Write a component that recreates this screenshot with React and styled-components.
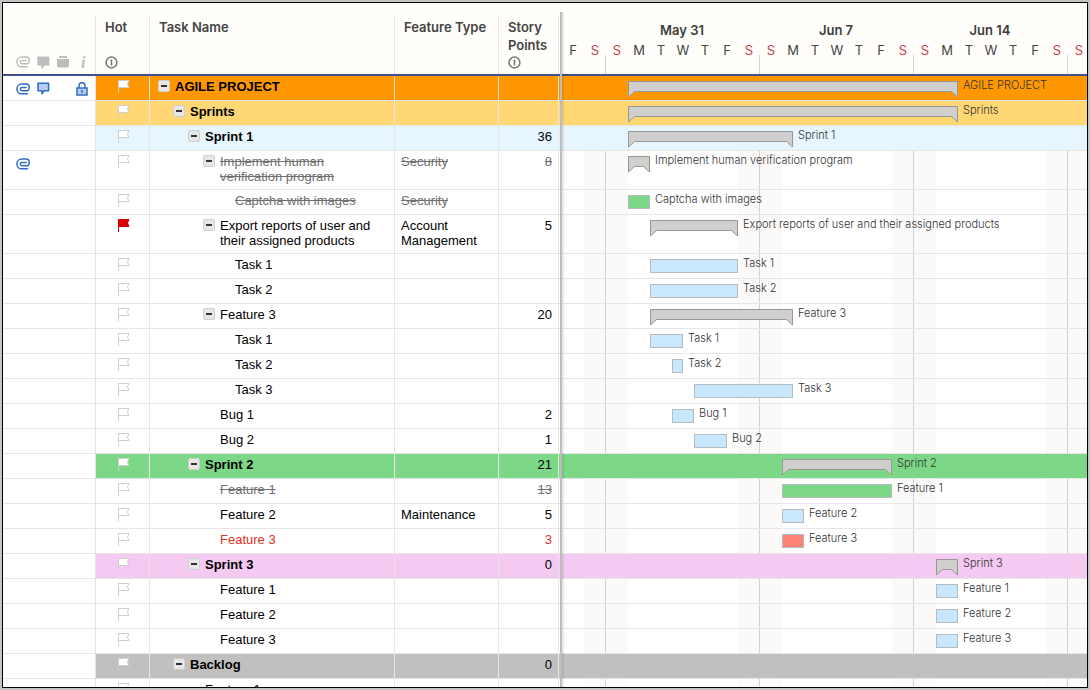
import styled, { createGlobalStyle } from "styled-components";

const DAY = 22;

const weeks = ["May 31", "Jun 7", "Jun 14"];
const days = "FSSMTWTFSSMTWTFSSMTWTFSS".split("");

// start and span are counted in days from the left edge of the timeline
const rows = [
  { name: "AGILE PROJECT", level: 0, parent: true, bold: true, color: "#ff9800", bar: "summary", start: 3, span: 15, icons: true },
  { name: "Sprints", level: 1, parent: true, bold: true, color: "#ffd774", bar: "summary", start: 3, span: 15 },
  { name: "Sprint 1", level: 2, parent: true, bold: true, color: "#e6f5fe", points: 36, bar: "summary", start: 3, span: 7.5 },
  { name: "Implement human verification program", level: 3, parent: true, done: true, type: "Security", points: 8, bar: "summary", start: 3, span: 1, clip: true },
  { name: "Captcha with images", level: 4, done: true, type: "Security", bar: "#7cd787", start: 3, span: 1 },
  { name: "Export reports of user and their assigned products", level: 3, parent: true, hot: true, type: "Account Management", points: 5, bar: "summary", start: 4, span: 4 },
  { name: "Task 1", level: 4, bar: "#c9e8fd", start: 4, span: 4 },
  { name: "Task 2", level: 4, bar: "#c9e8fd", start: 4, span: 4 },
  { name: "Feature 3", level: 3, parent: true, points: 20, bar: "summary", start: 4, span: 6.5 },
  { name: "Task 1", level: 4, bar: "#c9e8fd", start: 4, span: 1.5 },
  { name: "Task 2", level: 4, bar: "#c9e8fd", start: 5, span: 0.5 },
  { name: "Task 3", level: 4, bar: "#c9e8fd", start: 6, span: 4.5 },
  { name: "Bug 1", level: 3, points: 2, bar: "#c9e8fd", start: 5, span: 1 },
  { name: "Bug 2", level: 3, points: 1, bar: "#c9e8fd", start: 6, span: 1.5 },
  { name: "Sprint 2", level: 2, parent: true, bold: true, color: "#7cd787", points: 21, bar: "summary", start: 10, span: 5 },
  { name: "Feature 1", level: 3, done: true, points: 13, bar: "#7cd787", start: 10, span: 5 },
  { name: "Feature 2", level: 3, type: "Maintenance", points: 5, bar: "#c9e8fd", start: 10, span: 1 },
  { name: "Feature 3", level: 3, late: true, points: 3, bar: "#ff8278", start: 10, span: 1 },
  { name: "Sprint 3", level: 2, parent: true, bold: true, color: "#f4c9f2", points: 0, bar: "summary", start: 17, span: 1 },
  { name: "Feature 1", level: 3, bar: "#c9e8fd", start: 17, span: 1 },
  { name: "Feature 2", level: 3, bar: "#c9e8fd", start: 17, span: 1 },
  { name: "Feature 3", level: 3, bar: "#c9e8fd", start: 17, span: 1 },
  { name: "Backlog", level: 1, parent: true, bold: true, color: "#c1c0be", points: 0 },
  { name: "Feature 1", level: 2 },
];

const ClipIcon = () => (
  <svg width="14" height="12" viewBox="0 0 14 12" fill="none" stroke="currentColor" strokeWidth="1.5" strokeLinecap="round">
    <path d="M11.4 10.8H5.6A4.7 4.9 0 0 1 5.6 1H10.2a3 3.4 0 0 1 0 6.8H6a1.7 1.7 0 0 1 0-3.4h4.2" />
  </svg>
);

const CommentIcon = ({ fill }) => (
  <svg width="13" height="13" viewBox="0 0 13 13" fill={fill} stroke="currentColor" strokeWidth="1.5" strokeLinejoin="round">
    <path d="M1 1.2h10.6v7.6H7L5 11.8V8.8H1z" />
  </svg>
);

const ProofIcon = () => (
  <svg width="12" height="12" viewBox="0 0 12 12" fill="currentColor">
    <rect x="2" y="0" width="8" height="2" />
    <path d="M0 3h12v6.5a2 2 0 0 1-2 2H2a2 2 0 0 1-2-2z" />
  </svg>
);

const LockIcon = () => (
  <svg width="12" height="14" viewBox="0 0 12 14" fill="none" stroke="currentColor" strokeWidth="1.5">
    <path d="M3 6V3.8a3 3 0 0 1 6 0V6" />
    <rect x="1" y="6" width="10" height="7" fill="#b9cdf0" />
    <path d="M6 8v3" />
  </svg>
);

const HintIcon = () => (
  <svg width="13" height="13" viewBox="0 0 13 13" fill="none" stroke="#757575" strokeWidth="1.5">
    <circle cx="6.5" cy="6.5" r="5.4" />
    <path d="M6.5 3.5v6M5.5 4.2h1" />
  </svg>
);

const FlagIcon = ({ hot }) => (
  <svg width="12" height="15" viewBox="0 0 12 15" fill={hot ? "#d60000" : "#fff"} stroke={hot ? "#d60000" : "#cfcfcf"}>
    <path d="M.5 1.5h10.5l-1.5 3.5 1.5 3.5H.5" />
    <path d="M.5 1v13" fill="none" />
  </svg>
);

const SummaryBar = ({ width }) => (
  <svg width={width} height="17" fill="#d0cfce" stroke="#979797">
    <path d={`M.5 .5H${width - 0.5}V16L${width - 6.5} 10.5H6.5L.5 16Z`} />
  </svg>
);

const App = () => {
  return (
    <>
      <GlobalStyle />
      <Frame>
        <Sheet>
          <colgroup>
            <Col $width={93} />
            <Col $width={54} />
            <Col $width={245} />
            <Col $width={104} />
            <Col $width={60} />
            <Col $width={3} />
            <col />
          </colgroup>
          <thead>
            <tr>
              <Th>
                <HeadIcons>
                  <IconSlot $width={21}>
                    <ClipIcon />
                  </IconSlot>
                  <IconSlot $width={20}>
                    <CommentIcon fill="currentColor" />
                  </IconSlot>
                  <IconSlot $width={24}>
                    <ProofIcon />
                  </IconSlot>
                  <Info>i</Info>
                </HeadIcons>
              </Th>
              <Th>
                <Title>
                  Hot
                  <HintIcon />
                </Title>
              </Th>
              <Th>
                <Title>Task Name</Title>
              </Th>
              <Th>
                <Title>Feature Type</Title>
              </Th>
              <Th>
                <Title>
                  Story Points
                  <HintIcon />
                </Title>
              </Th>
              <Th />
              <Th>
                <Calendar>
                  <Weeks>
                    {weeks.map((week) => (
                      <Week key={week}>{week}</Week>
                    ))}
                  </Weeks>
                  <Days>
                    {days.map((day, i) => (
                      <Day key={i} $weekend={day === "S"}>
                        {day}
                      </Day>
                    ))}
                  </Days>
                </Calendar>
              </Th>
            </tr>
          </thead>
          <tbody>
            {rows.map((row, i) => (
              <Row key={i} $color={row.color} $done={row.done} $late={row.late}>
                <IconCell>
                  <RowIcons>
                    <IconSlot $width={21}>
                      {(row.icons || row.clip) && <ClipIcon />}
                    </IconSlot>
                    <IconSlot $width={39}>
                      {row.icons && <CommentIcon fill="#b9cdf0" />}
                    </IconSlot>
                    {row.icons && <LockIcon />}
                  </RowIcons>
                </IconCell>
                <FlagCell>
                  <FlagIcon hot={row.hot} />
                </FlagCell>
                <TextCell $done={row.done}>
                  <Task $level={row.level} $bold={row.bold}>
                    {row.parent ? (
                      <Toggle type="button" aria-label="Collapse" />
                    ) : (
                      <Spacer />
                    )}
                    <Name>{row.name}</Name>
                  </Task>
                </TextCell>
                <TypeCell $done={row.done}>{row.type}</TypeCell>
                <PointsCell $done={row.done}>{row.points}</PointsCell>
                <Td $plain />
                <ChartCell $color={row.color}>
                  {row.bar && (
                    <Track style={{ paddingLeft: row.start * DAY }}>
                      {row.bar === "summary" ? (
                        <SummaryBar width={row.span * DAY} />
                      ) : (
                        <Bar $fill={row.bar} style={{ width: row.span * DAY }} />
                      )}
                      <Label>{row.name}</Label>
                    </Track>
                  )}
                </ChartCell>
              </Row>
            ))}
          </tbody>
        </Sheet>
        <Splitter />
      </Frame>
    </>
  );
};

export default App;

const GlobalStyle = createGlobalStyle`
  * {
    box-sizing: border-box;
  }

  body {
    margin: 0;
    background-color: #c4c4c4;
    font-family: "Liberation Sans", Arial, sans-serif;
    font-size: 13px;
    line-height: 15px;
    color: #000;
  }

  svg {
    display: block;
    flex-shrink: 0;
  }
`;

const Frame = styled.main`
  position: relative;
  height: calc(100vh - 4px);
  margin: 2px;
  border: 1px solid #000;
  background-color: #fff;
  overflow: hidden;
`;

const Sheet = styled.table`
  width: 100%;
  table-layout: fixed;
  border-collapse: separate;
  border-spacing: 0;
`;

const Col = styled.col`
  width: ${({ $width }) => $width}px;
`;

const Th = styled.th`
  height: 73px;
  padding: 13px 0 0;
  background-color: #fffefa;
  border-bottom: 2px solid #43508f;
  vertical-align: top;
  text-align: left;
  font-weight: 600;
  overflow: hidden;
`;

const Title = styled.div`
  display: flex;
  flex-direction: column;
  justify-content: space-between;
  height: 58px;
  padding: 2px 9px 5px;
  border-right: 1px solid #e6e6e6;
  font-family: Inter, sans-serif;
  font-size: 13px;
  line-height: 18px;
  color: #444;
`;

const HeadIcons = styled.div`
  display: flex;
  align-items: center;
  height: 58px;
  padding: 34px 0 0 13px;
  border-right: 1px solid #e6e6e6;
  color: #bdbdbd;
`;

const Info = styled.span`
  font-family: "Liberation Serif", serif;
  font-size: 16px;
  font-style: italic;
  font-weight: 700;
`;

const IconSlot = styled.span`
  width: ${({ $width }) => $width}px;
`;

// the week ticks run along the bottom 19px only
const Calendar = styled.div`
  height: 58px;
  font-family: Inter, sans-serif;
  font-size: 13px;
  line-height: 20px;
  color: #3c3c3c;
  background: repeating-linear-gradient(
      to right,
      transparent 0 43px,
      #d2d2d2 43px 44px,
      transparent 44px 154px
    )
    bottom / 100% 19px no-repeat;
`;

const Weeks = styled.div`
  display: flex;
  padding: 4px 0 0 43px;
`;

const Week = styled.span`
  flex: none;
  width: 154px;
  text-align: center;
`;

const Days = styled.div`
  display: flex;
  font-weight: 400;
`;

const Day = styled.span`
  flex: none;
  width: 22px;
  text-align: center;
  color: ${({ $weekend }) => ($weekend ? "#c8414b" : "#444")};
`;

const Row = styled.tr`
  background-color: ${({ $color }) => $color || "#fff"};
  color: ${({ $done, $late }) => ($done ? "#707070" : $late ? "#dd3224" : "#000")};
`;

const Td = styled.td`
  height: 25px;
  padding: 3px 0 5px;
  border-bottom: 1px solid #e6e6e6;
  border-right: ${({ $plain }) => ($plain ? "none" : "1px solid #e6e6e6")};
  vertical-align: top;
`;

const IconCell = styled(Td)`
  padding-bottom: 0;
  background-color: #fff;
  color: #2f6ec4;
`;

const RowIcons = styled.div`
  display: flex;
  align-items: center;
  height: 19px;
  padding-left: 13px;
`;

const FlagCell = styled(Td)`
  padding-left: 22px;
`;

const TextCell = styled(Td)`
  text-decoration: ${({ $done }) => ($done ? "line-through" : "none")};
`;

const TypeCell = styled(TextCell)`
  padding-left: 6px;
`;

const PointsCell = styled(TextCell)`
  padding-right: 6px;
  text-align: right;
`;

const Task = styled.div`
  display: flex;
  gap: 5px;
  padding-left: ${({ $level }) => 8 + $level * 15}px;
  padding-right: 12px;
  font-weight: ${({ $bold }) => ($bold ? 700 : 400)};
`;

const Name = styled.span`
  flex: 1;
`;

const Spacer = styled.span`
  width: 12px;
`;

const Toggle = styled.button`
  display: flex;
  align-items: center;
  justify-content: center;
  flex: none;
  width: 12px;
  height: 12px;
  margin-top: 1px;
  padding: 0;
  background-color: #e9e7e5;
  border: 1px solid #cfcfcf;
  border-radius: 2px;
  cursor: pointer;

  &::before {
    content: "";
    width: 6px;
    height: 2px;
    background-color: #333;
  }
`;

const ChartCell = styled(Td)`
  padding: 0;
  border-right: none;
  overflow: hidden;
  background: ${({ $color }) =>
    $color ||
    `repeating-linear-gradient(
      to right,
      #fff 0 22px,
      #fbfaf9 22px 43px,
      #d2d2d2 43px 44px,
      #fbfaf9 44px 66px,
      #fff 66px 154px
    )`};
`;

const Track = styled.div`
  display: flex;
  gap: 5px;
  padding-top: 5px;
`;

const Bar = styled.div`
  flex: none;
  height: 14px;
  background-color: ${({ $fill }) => $fill};
  border: 1px solid #b4bcc2;
`;

const Label = styled.span`
  font-family: Inter, sans-serif;
  font-size: 11px;
  font-weight: 300;
  line-height: 8px;
  color: #333;
  white-space: nowrap;
`;

const Splitter = styled.div`
  position: absolute;
  top: 9px;
  bottom: 0;
  left: 557px;
  width: 5px;
  background: linear-gradient(
    to right,
    #bdbdbd 0 2px,
    rgba(0, 0, 0, 0.12) 2px,
    rgba(0, 0, 0, 0) 5px
  );
`;
